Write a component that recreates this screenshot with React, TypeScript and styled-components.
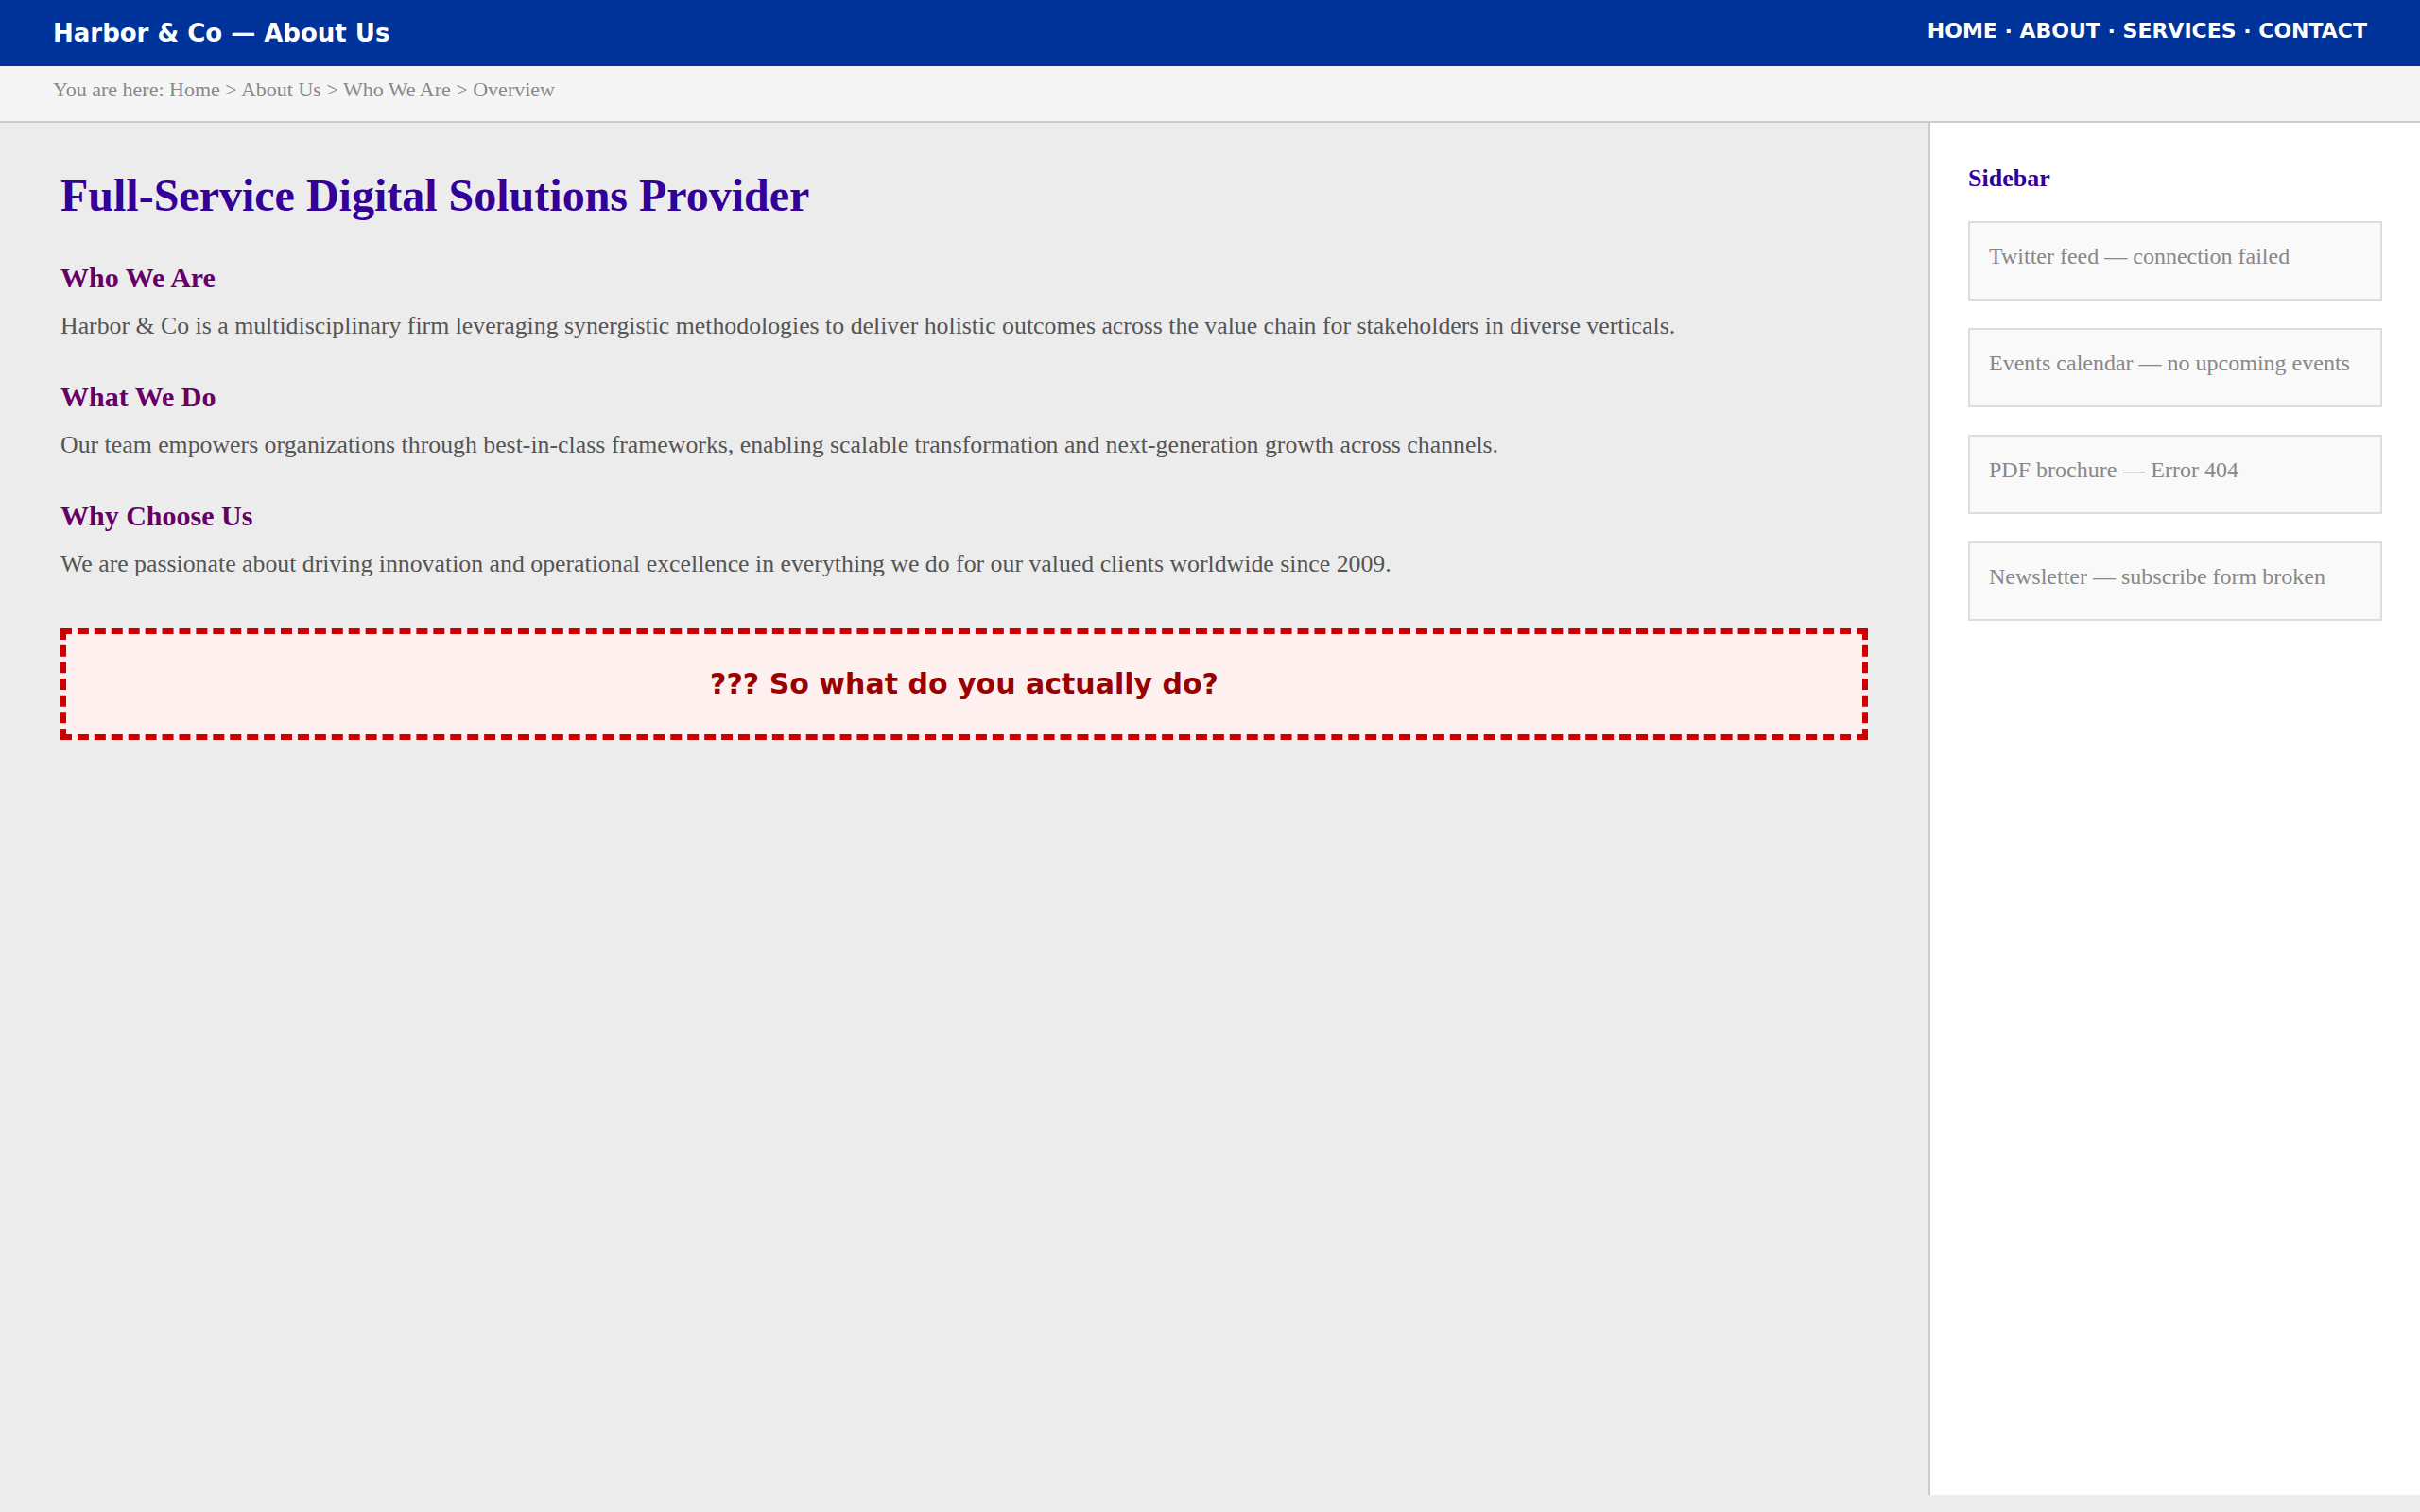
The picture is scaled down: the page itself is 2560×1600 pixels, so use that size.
import React from "react";
import styled, { createGlobalStyle } from "styled-components";

const GlobalStyle = createGlobalStyle`
  html,
  body {
    margin: 0;
    padding: 0;
  }

  body {
    background: #ececec;
    font-family: "Liberation Serif", "Times New Roman", serif;
  }

  * {
    box-sizing: border-box;
  }
`;

const Header = styled.header`
  display: flex;
  align-items: center;
  justify-content: space-between;
  height: 70px;
  padding: 0 56px;
  background: #003399;
  color: #ffffff;
  font-family: "DejaVu Sans", Verdana, sans-serif;
  font-weight: bold;
`;

const SiteTitle = styled.div`
  font-size: 26px;
`;

const Nav = styled.nav`
  margin-bottom: 5px;
  font-size: 22px;
`;

const Breadcrumb = styled.div`
  height: 60px;
  padding: 12px 56px 0;
  background: #f5f5f5;
  border-bottom: 2px solid #cccccc;
  color: #888888;
  font-size: 22px;
  line-height: 26px;
`;

const Layout = styled.div`
  display: flex;
  min-height: calc(100vh - 148px);
`;

const Main = styled.main`
  flex: 1;
  padding: 48px 64px;
`;

const PageTitle = styled.h1`
  margin: 0 0 40px;
  color: #330099;
  font-size: 48px;
  line-height: 1.2;
`;

const Sections = styled.div`
  display: flex;
  flex-direction: column;
  gap: 39px;
`;

const SectionTitle = styled.h2`
  margin: 0 0 15px;
  color: #660066;
  font-size: 30px;
  line-height: 36px;
`;

const SectionText = styled.p`
  margin: 0;
  color: #555555;
  font-size: 25.8px;
  line-height: 36px;
`;

const Callout = styled.div`
  margin-top: 50px;
  padding: 35px 24px;
  background: #fff0f0;
  border: 6px dashed #cc0000;
  color: #990000;
  font-family: "DejaVu Sans", Verdana, sans-serif;
  font-size: 30px;
  font-weight: bold;
  line-height: 36px;
  text-align: center;
`;

const Sidebar = styled.aside`
  width: 520px;
  padding: 44px 40px 40px;
  background: #ffffff;
  border-left: 2px solid #cccccc;
`;

const SidebarTitle = styled.h3`
  margin: 0 0 30px;
  color: #330099;
  font-size: 26px;
  line-height: 30px;
`;

const WidgetList = styled.div`
  display: flex;
  flex-direction: column;
  gap: 29px;
`;

const Widget = styled.div`
  height: 84px;
  padding: 21px 20px 0;
  background: #f9f9f9;
  border: 2px solid #dddddd;
  color: #888888;
  font-size: 24px;
  line-height: 28px;
`;

const sections = [
  {
    title: "Who We Are",
    text: "Harbor & Co is a multidisciplinary firm leveraging synergistic methodologies to deliver holistic outcomes across the value chain for stakeholders in diverse verticals.",
  },
  {
    title: "What We Do",
    text: "Our team empowers organizations through best-in-class frameworks, enabling scalable transformation and next-generation growth across channels.",
  },
  {
    title: "Why Choose Us",
    text: "We are passionate about driving innovation and operational excellence in everything we do for our valued clients worldwide since 2009.",
  },
];

const widgets = [
  "Twitter feed — connection failed",
  "Events calendar — no upcoming events",
  "PDF brochure — Error 404",
  "Newsletter — subscribe form broken",
];

export default function App() {
  return (
    <>
      <GlobalStyle />
      <Header>
        <SiteTitle>Harbor &amp; Co — About Us</SiteTitle>
        <Nav>HOME · ABOUT · SERVICES · CONTACT</Nav>
      </Header>
      <Breadcrumb>
        You are here: Home &gt; About Us &gt; Who We Are &gt; Overview
      </Breadcrumb>
      <Layout>
        <Main>
          <PageTitle>Full-Service Digital Solutions Provider</PageTitle>
          <Sections>
            {sections.map((s) => (
              <section key={s.title}>
                <SectionTitle>{s.title}</SectionTitle>
                <SectionText>{s.text}</SectionText>
              </section>
            ))}
          </Sections>
          <Callout>??? So what do you actually do?</Callout>
        </Main>
        <Sidebar>
          <SidebarTitle>Sidebar</SidebarTitle>
          <WidgetList>
            {widgets.map((w) => (
              <Widget key={w}>{w}</Widget>
            ))}
          </WidgetList>
        </Sidebar>
      </Layout>
    </>
  );
}
